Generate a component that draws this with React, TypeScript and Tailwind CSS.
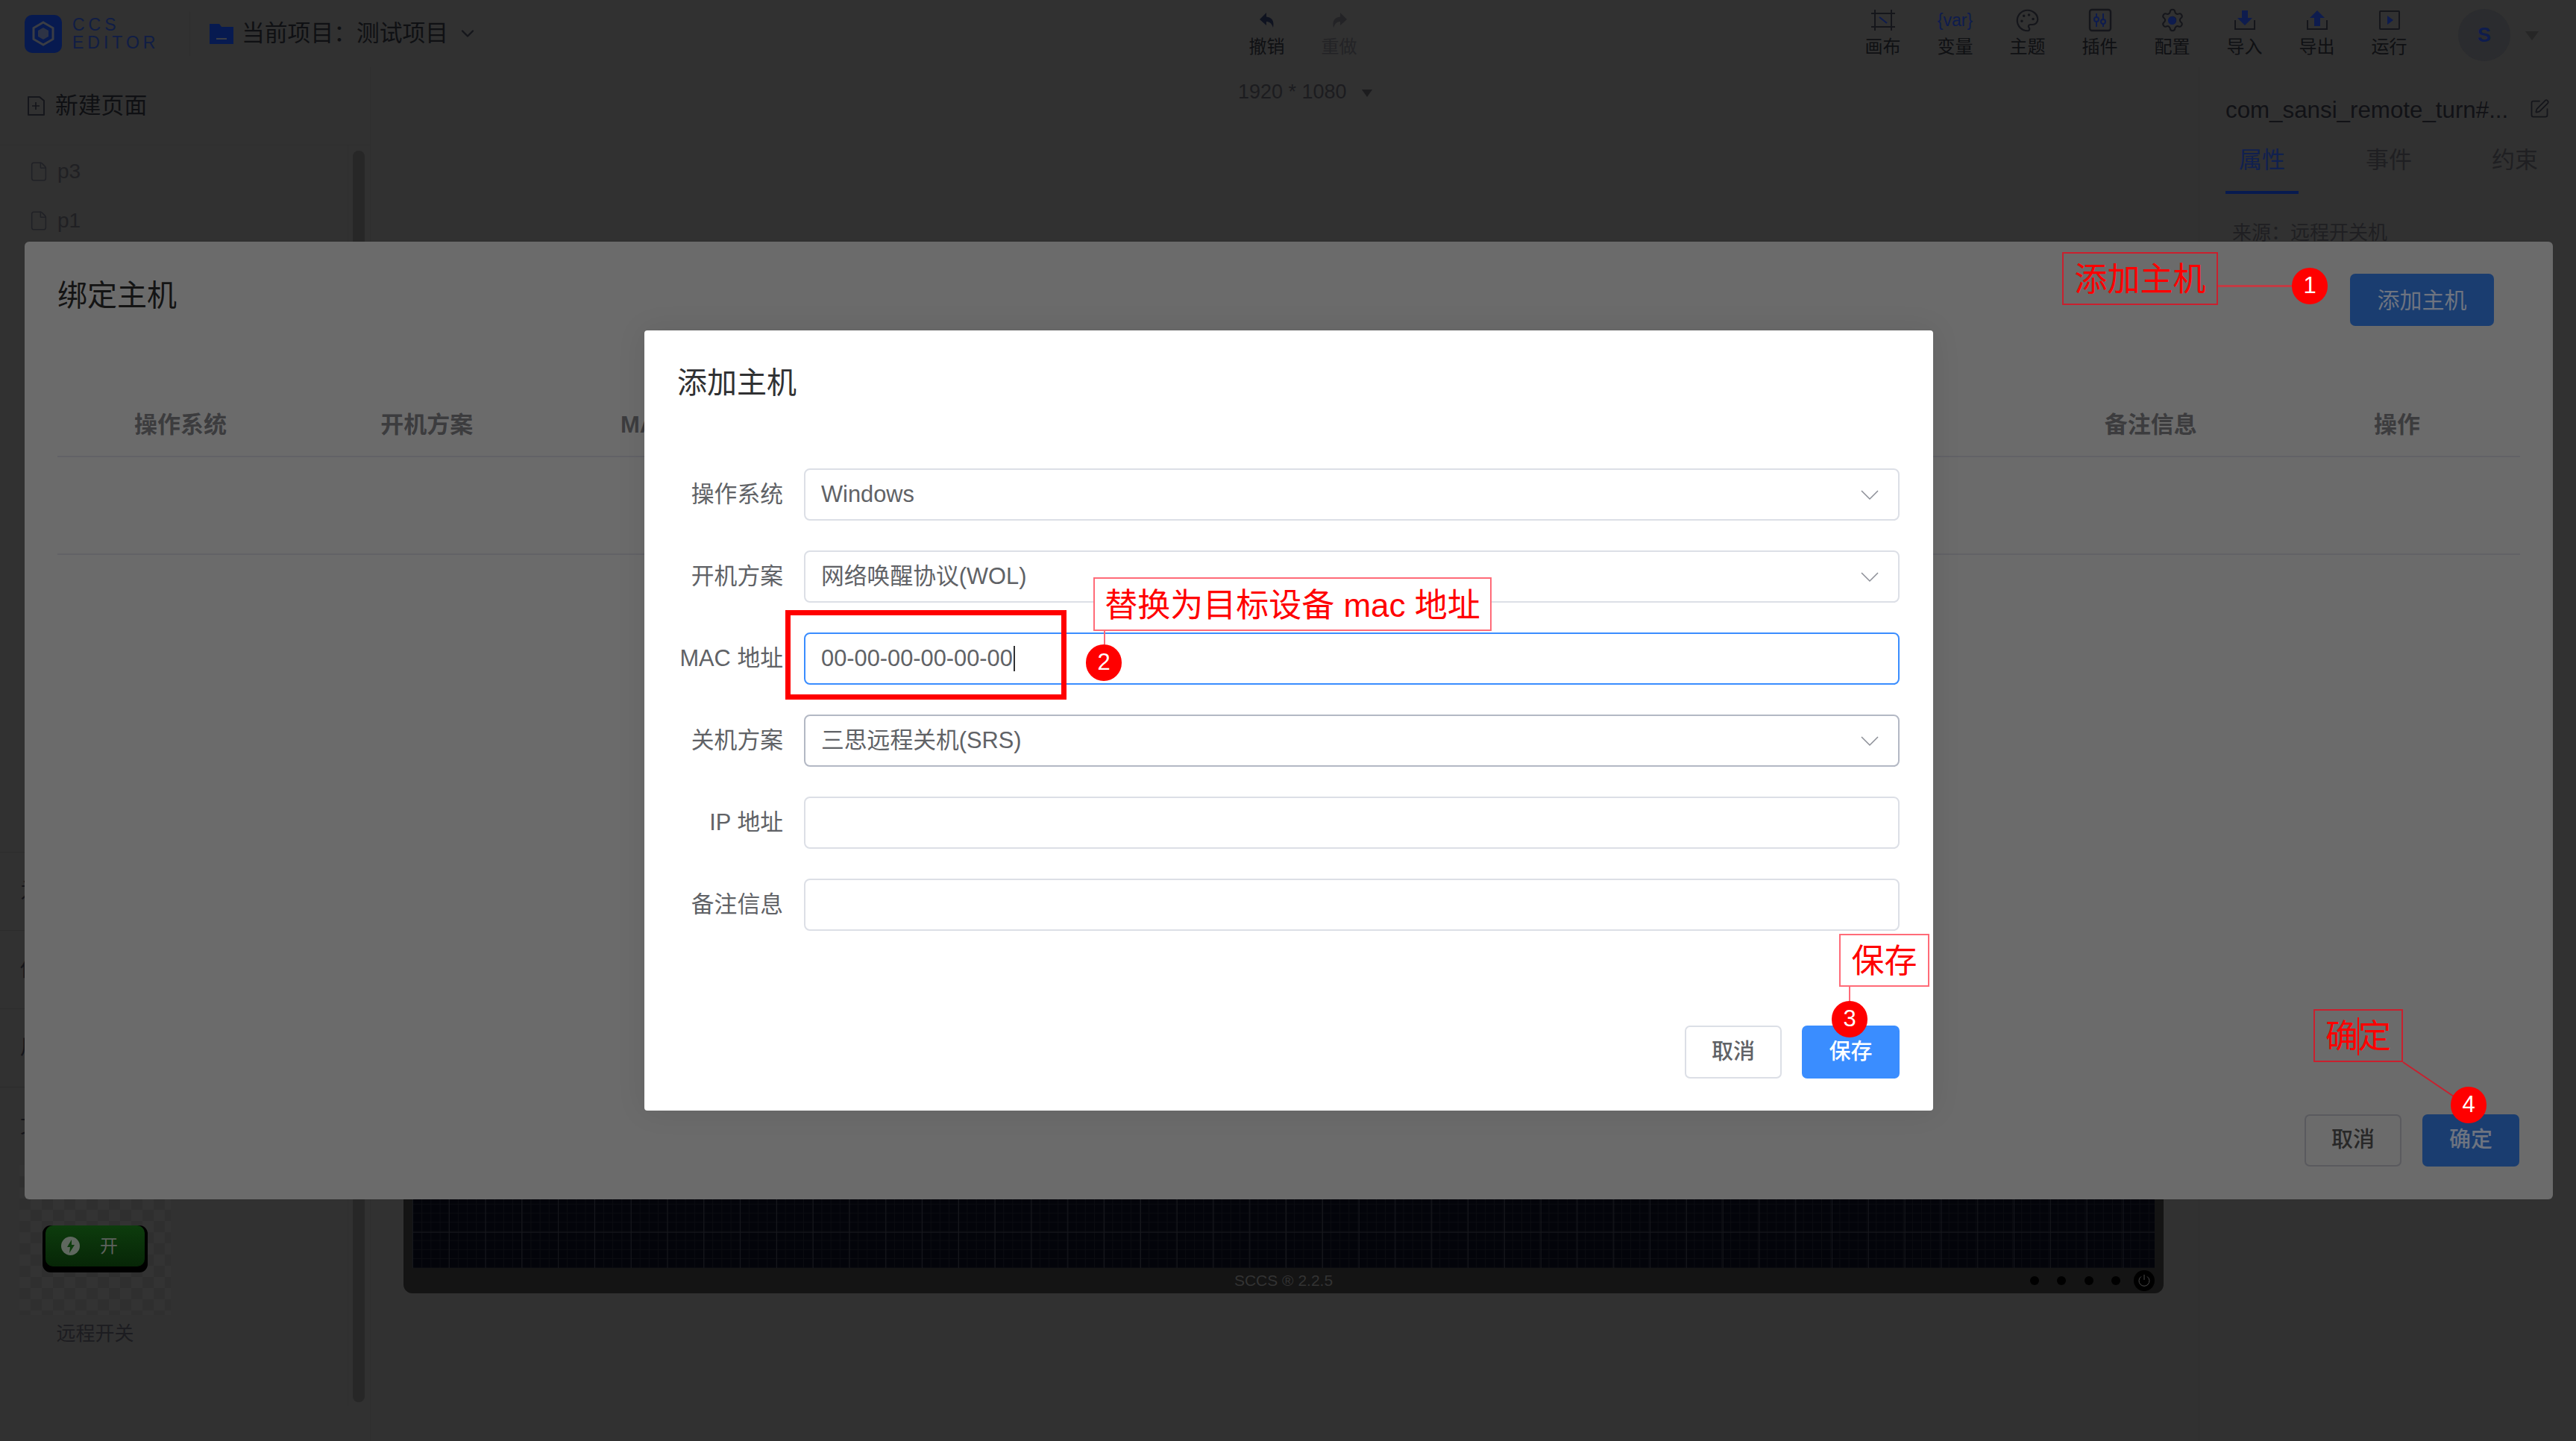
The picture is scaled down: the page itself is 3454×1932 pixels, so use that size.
import { ChevronDown, File, Palette, Settings, SquarePen } from "lucide-react";
import type { ReactNode } from "react";

const DARK = "#15161b";
const NAVY = "#0e1c4e";

const UndoIcon = ({ flip, color }: { flip?: boolean; color: string }) => (
  <svg width="24" height="22" viewBox="0 0 24 22" className={flip ? "-scale-x-100" : ""}>
    <path d="M11 1 L2 10 L11 18 V13 C15 13 18 15 20 21 C22 12 18 7 11 6.5Z" fill={color} />
  </svg>
);

const CanvasIcon = () => (
  <svg width="34" height="30" viewBox="0 0 34 30" fill="none">
    <path d="M6 1V29M28 1V29M1 6H33M1 24H33" stroke={DARK} strokeWidth="2" />
    <path d="M12 11L22 19" stroke={NAVY} strokeWidth="2" />
  </svg>
);

const PluginIcon = () => (
  <svg width="32" height="32" viewBox="0 0 32 32" fill="none">
    <rect x="2" y="2" width="28" height="28" rx="3" stroke={DARK} strokeWidth="2.4" />
    <path d="M11 7V12M11 18V25M20 7V15M20 21V25" stroke={NAVY} strokeWidth="2" />
    <circle cx="11" cy="15" r="3" stroke={NAVY} strokeWidth="2" />
    <circle cx="20" cy="18" r="3" stroke={NAVY} strokeWidth="2" />
  </svg>
);

const GearIcon = () => (
  <div className="relative flex items-center justify-center">
    <Settings size={34} strokeWidth={1.4} color={DARK} />
    <div className="absolute h-[11px] w-[11px] rounded-full bg-[#0e1c4e]" />
  </div>
);

const TrayIcon = ({ up }: { up?: boolean }) => (
  <svg width="30" height="28" viewBox="0 0 30 28" fill="none">
    <path d="M2 14V26H28V14" stroke={DARK} strokeWidth="2" />
    {up ? (
      <path d="M15 1L25 11H19V22H11V11H5Z" fill={NAVY} />
    ) : (
      <path d="M11 1H19V11H25L15 21L5 11H11Z" fill={NAVY} />
    )}
  </svg>
);

const RunIcon = () => (
  <svg width="28" height="26" viewBox="0 0 28 26" fill="none">
    <rect x="1" y="1" width="26" height="24" rx="1" stroke={DARK} strokeWidth="2" />
    <path d="M11 7L19 13L11 19Z" fill={NAVY} />
  </svg>
);

const SelectChevron = () => (
  <svg className="ml-auto" width="26" height="15" viewBox="0 0 26 15" fill="none">
    <path d="M2 2L13 13L24 2" stroke="#8b8e96" strokeWidth="1.5" />
  </svg>
);

const tools: { label: string; icon: ReactNode; muted?: boolean }[] = [
  { label: "画布", icon: <CanvasIcon /> },
  { label: "变量", icon: <span className="text-[23px] text-[#0e1c4e]">{"{var}"}</span> },
  { label: "主题", icon: <Palette size={33} strokeWidth={1.6} color={DARK} /> },
  { label: "插件", icon: <PluginIcon /> },
  { label: "配置", icon: <GearIcon /> },
  { label: "导入", icon: <TrayIcon /> },
  { label: "导出", icon: <TrayIcon up /> },
  { label: "运行", icon: <RunIcon /> },
];

const ToolItem = ({ label, icon, muted }: { label: string; icon: ReactNode; muted?: boolean }) => (
  <div className="flex w-[97px] shrink-0 flex-col items-center pt-[11px]">
    <div className="flex h-[32px] items-center justify-center">{icon}</div>
    <span className={`mt-[7px] text-[24px] leading-[26px] ${muted ? "text-[#232326]" : "text-[#0f1013]"}`}>{label}</span>
  </div>
);

const Header = () => (
  <header className="flex h-[90px] shrink-0">
    <div className="flex w-[1650px] shrink-0 items-center pl-[33px]">
      <div className="flex h-[51px] w-[50px] items-center justify-center rounded-[10px] bg-[#071a50]">
        <svg width="32" height="34" viewBox="0 0 32 34" fill="none">
          <path d="M16 2L29 9.5V24.5L16 32L3 24.5V9.5Z" stroke="#3a3d45" strokeWidth="3" />
          <path d="M16 9L23 13V21L16 25L9 21V13Z" fill="#2d3345" />
        </svg>
      </div>
      <div className="ml-[14px] flex w-[157px] shrink-0 flex-col gap-[1px] text-[23px] leading-[23px] tracking-[5px] text-[#101d45]">
        <span>CCS</span>
        <span>EDITOR</span>
      </div>
      <div className="h-[60px] w-px bg-[#2e2e2e]" />
      <svg className="ml-[26px]" width="32" height="27" viewBox="0 0 32 27">
        <path d="M0 0H13L16 4H32V27H0Z" fill="#071a50" />
        <path d="M9 20H23" stroke="#3a3d45" strokeWidth="2" />
      </svg>
      <span className="ml-[11px] text-[30.8px] leading-[40px] text-[#0f1013]">当前项目：测试项目</span>
      <ChevronDown className="ml-[12px]" size={28} strokeWidth={2} color={DARK} />
    </div>
    <ToolItem label="撤销" icon={<UndoIcon color="#0f1320" />} />
    <ToolItem label="重做" icon={<UndoIcon flip color="#232326" />} muted />
    <div className="w-[632px] shrink-0" />
    {tools.map((t) => (
      <ToolItem key={t.label} {...t} />
    ))}
    <div className="ml-[44px] mt-[12px] flex h-[70px] w-[70px] items-center justify-center rounded-full bg-[#2b2c2f] text-[27px] font-bold text-[#0e1c4e]">
      S
    </div>
    <div className="ml-[20px] mt-[42px] h-0 w-0 border-x-[9px] border-t-[12px] border-x-transparent border-t-[#262626]" />
  </header>
);

const Sidebar = () => (
  <aside className="flex w-[497px] shrink-0 flex-col border-r border-[#2e2e2e]">
    <div className="flex h-[105px] shrink-0 items-center gap-[14px] border-b border-[#2e2e2e] pl-[36px]">
      <svg width="24" height="26" viewBox="0 0 24 26" fill="none">
        <path d="M2 1H17L23 6V25H2Z" stroke={DARK} strokeWidth="2" strokeLinejoin="round" />
        <path d="M12 8V18M7 13H17" stroke={DARK} strokeWidth="1.6" />
      </svg>
      <span className="text-[30.8px] text-[#0f1013]">新建页面</span>
    </div>
    <div className="flex h-[1690px] shrink-0 pr-[7px]">
      <div className="flex flex-1 flex-col border-r border-[#2e2e2e] pt-[2px]">
        {["p3", "p1"].map((p) => (
          <div key={p} className="flex h-[66px] shrink-0 items-center gap-[11px] pl-[38px] text-[28px] text-[#202023]">
            <File size={28} strokeWidth={1.3} color="#202126" />
            {p}
          </div>
        ))}
        <div className="mt-[813px] flex flex-col">
          {["为", "传", "川", "文"].map((c) => (
            <div key={c} className="flex h-[105px] items-center border-t border-[#2c2c2c] pl-[27px] text-[28px] text-[#15161b]">
              {c}
            </div>
          ))}
        </div>
        <div className="ml-[26px] flex h-[201px] w-[203px] flex-col items-center justify-end bg-[repeating-conic-gradient(#2f2f2f_0_25%,#333333_0_50%)] bg-[size:30px_30px] pb-[57px]">
          <div className="h-[63px] w-[141px] rounded-[11px] bg-black px-[4px]">
            <div className="flex h-[55px] items-center gap-[27px] rounded-[10px] bg-gradient-to-b from-[#0d3c0d] to-[#072607] pl-[21px]">
              <div className="flex h-[25px] w-[25px] items-center justify-center rounded-full bg-[#5f685f]">
                <svg width="12" height="18" viewBox="0 0 12 18">
                  <path d="M7 0L1 10H5L4 18L11 7H7Z" fill="#0d3c0d" />
                </svg>
              </div>
              <span className="text-[24px] text-[#5d625d]">开</span>
            </div>
          </div>
        </div>
        <div className="ml-[26px] mt-[12px] w-[203px] text-center text-[26px] leading-[26px] text-[#1c1c20]">远程开关</div>
      </div>
      <div className="ml-[6px] mt-[7px] h-[1678px] w-[16px] rounded-full bg-[#272727]" />
    </div>
  </aside>
);

const CanvasArea = () => (
  <main className="flex min-w-0 flex-1 flex-col pl-[44px] pr-[47px]">
    <div className="flex h-[66px] shrink-0 items-center gap-[20px] pl-[1119px]">
      <span className="text-[27px] text-[#1c1c1f]">1920 * 1080</span>
      <div className="mt-[4px] h-0 w-0 border-x-[7px] border-t-[10px] border-x-transparent border-t-[#1c1c1e]" />
    </div>
    <div className="mt-[227px] flex h-[1351px] flex-col rounded-b-[12px] bg-[#141414] px-[12px]">
      <div className="flex-1 bg-[#03040a] bg-[linear-gradient(#17181d_1px,transparent_1px),linear-gradient(90deg,#17181d_1px,transparent_1px),linear-gradient(#0b0c11_1px,transparent_1px),linear-gradient(90deg,#0b0c11_1px,transparent_1px)] bg-[size:48.8px_48.8px,48.8px_48.8px,12.2px_12.2px,12.2px_12.2px]" />
      <div className="relative flex h-[34px] shrink-0 items-center justify-center text-[21px] text-[#333333]">
        SCCS ® 2.2.5
        <div className="absolute right-0 flex items-center">
          <div className="mr-[18px] flex gap-[24.5px]">
            {[0, 1, 2, 3].map((d) => (
              <div key={d} className="h-[12px] w-[12px] rounded-full bg-black" />
            ))}
          </div>
          <div className="flex h-[28px] w-[28px] items-center justify-center rounded-full bg-black">
            <svg width="18" height="18" viewBox="0 0 18 18" fill="none">
              <path d="M5 3.5A7 7 0 1 0 13 3.5M9 1V8" stroke="#4a4a4a" strokeWidth="1" />
            </svg>
          </div>
        </div>
      </div>
    </div>
  </main>
);

const RightPanel = () => (
  <aside className="flex w-[506px] shrink-0 flex-col border-l border-[#2e2e2e] pl-[35px]">
    <div className="mt-[38px] flex h-[40px] items-center">
      <span className="w-[401px] whitespace-nowrap text-[31.3px] text-[#111216]">com_sansi_remote_turn#...</span>
      <SquarePen className="-mt-[4px] ml-[6px]" size={28} strokeWidth={1.5} color={DARK} />
    </div>
    <div className="mt-[27px] flex text-[31px] leading-[40px] text-[#1f1f22]">
      <span className="w-[98px] border-b-4 border-[#071a50] pb-[21px] text-center text-[#10204f]">属性</span>
      <span className="ml-[72px] w-[98px] text-center">事件</span>
      <span className="ml-[71px] w-[98px] text-center">约束</span>
    </div>
    <div className="ml-[9px] mt-[36px] text-[26px] leading-[32px] text-[#1f1f22]">来源：远程开关机</div>
  </aside>
);

const HostsDialog = () => (
  <div className="absolute left-[33px] top-[324px] flex h-[1284px] w-[3390px] flex-col rounded-[6px] bg-[#6b6b6b]">
    <div className="flex items-start justify-between pl-[44px] pr-[79px] pt-[43px]">
      <h2 className="mt-[9px] text-[40px] leading-[40px] text-[#141414]">绑定主机</h2>
      <button className="h-[70px] w-[193px] rounded-[7px] bg-[#1a3d70] text-[30px] text-[#6e7480]">添加主机</button>
    </div>
    <div className="ml-[44px] mr-[44px] mt-[113px] grid grid-cols-10 border-b-2 border-[#626266] pb-[21px] text-center text-[31px] font-bold leading-[40px] text-[#3c3c3e]">
      {["操作系统", "开机方案", "MAC 地址", "关机方案", "IP 地址", "", "", "", "备注信息", "操作"].map((c, i) => (
        <div key={i}>{c}</div>
      ))}
    </div>
    <div className="ml-[44px] mr-[44px] h-[131px] border-b-2 border-[#626266]" />
    <div className="mt-auto flex justify-end gap-[28px] pb-[44px] pr-[45px]">
      <button className="h-[70px] w-[130px] rounded-[7px] border-2 border-[#5a5a5e] text-[29px] font-medium text-[#282828]">取消</button>
      <button className="h-[70px] w-[130px] rounded-[7px] bg-[#1a3d70] text-[29px] font-medium text-[#6e7480]">确定</button>
    </div>
  </div>
);

type Field = { label: string; value?: string; select?: boolean; border?: string; caret?: boolean };

const fields: Field[] = [
  { label: "操作系统", value: "Windows", select: true, border: "border-[#dcdfe6]" },
  { label: "开机方案", value: "网络唤醒协议(WOL)", select: true, border: "border-[#dcdfe6]" },
  { label: "MAC 地址", value: "00-00-00-00-00-00", border: "border-[#3a8dff]", caret: true },
  { label: "关机方案", value: "三思远程关机(SRS)", select: true, border: "border-[#b3b8c4]" },
  { label: "IP 地址", border: "border-[#dcdfe6]" },
  { label: "备注信息", border: "border-[#dcdfe6]" },
];

const AddHostDialog = () => (
  <div className="absolute left-[864px] top-[443px] flex h-[1046px] w-[1728px] flex-col rounded-[4px] bg-white pl-[44px] pr-[45px] shadow-[0_0_40px_rgba(0,0,0,0.08)]">
    <h3 className="mt-[50px] text-[40px] leading-[40px] text-[#303133]">添加主机</h3>
    <div className="mt-[95px] flex flex-col gap-[40px]">
      {fields.map((f) => (
        <div key={f.label} className="flex items-center gap-[28px]">
          <label className="w-[142px] shrink-0 whitespace-nowrap text-right text-[30.8px] text-[#606266]">{f.label}</label>
          <div className={`flex h-[70px] flex-1 items-center rounded-[8px] border-2 pl-[21px] pr-[25px] text-[30.8px] text-[#606266] ${f.border}`}>
            <span>{f.value}</span>
            {f.caret && <span className="ml-[1px] h-[34px] w-[2px] bg-[#303133]" />}
            {f.select && <SelectChevron />}
          </div>
        </div>
      ))}
    </div>
    <div className="mt-auto flex justify-end gap-[27px] pb-[43px]">
      <button className="h-[71px] w-[130px] rounded-[7px] border-2 border-[#dcdfe6] text-[29px] font-medium text-[#606266]">取消</button>
      <button className="h-[71px] w-[131px] rounded-[7px] bg-[#3a8dff] text-[29px] font-medium text-white">保存</button>
    </div>
  </div>
);

const Step = ({ n, className }: { n: number; className: string }) => (
  <div className={`absolute flex h-[49px] w-[48px] items-center justify-center rounded-full bg-[#ff0000] text-[31px] font-medium text-white ${className}`}>
    {n}
  </div>
);

const Annotations = () => (
  <>
    {/* 1 添加主机 */}
    <div className="absolute left-[2765px] top-[338px] flex h-[71px] w-[209px] items-center justify-center border-2 border-[#c9202e] pt-[3px] text-[44px] text-[#ff0000]">添加主机</div>
    <div className="absolute left-[2974px] top-[382px] h-[3px] w-[99px] bg-[#c23a44]" />
    <Step n={1} className="left-[3073px] top-[359px]" />

    {/* 2 MAC 地址 */}
    <div className="absolute left-[1053px] top-[818px] h-[120px] w-[377px] border-[7px] border-[#ff0000]" />
    <div className="absolute left-[1466px] top-[774px] flex h-[72px] w-[534px] items-center justify-center whitespace-nowrap border-2 border-[#ff6b78] bg-white pt-[3px] text-[44px] text-[#ff0000]">替换为目标设备 mac 地址</div>
    <div className="absolute left-[1480px] top-[846px] h-[18px] w-[2px] bg-[#ff6b78]" />
    <Step n={2} className="left-[1456px] top-[864px]" />

    {/* 3 保存 */}
    <div className="absolute left-[2466px] top-[1252px] flex h-[71px] w-[121px] items-center justify-center border-2 border-[#ff6b78] bg-white pt-[3px] text-[44px] text-[#ff0000]">保存</div>
    <div className="absolute left-[2479px] top-[1323px] h-[19px] w-[2px] bg-[#ff6b78]" />
    <Step n={3} className="left-[2456px] top-[1342px]" />

    {/* 4 确定 */}
    <div className="absolute left-[3102px] top-[1353px] flex h-[71px] w-[120px] items-center justify-center border-2 border-[#c9202e] pt-[3px] text-[44px] text-[#ff0000]">确定</div>
    <div className="absolute left-[3161px] top-[1364px] h-[51px] w-[2px] bg-[#ff0000]" />
    <svg className="absolute left-[3220px] top-[1422px]" width="80" height="60" viewBox="0 0 80 60">
      <path d="M2 2L70 48" stroke="#c9202e" strokeWidth="2" />
    </svg>
    <Step n={4} className="left-[3286px] top-[1457px]" />
  </>
);

export default function App() {
  return (
    <div className="relative flex h-[1932px] w-[3454px] flex-col overflow-hidden bg-[#313131] font-['Liberation_Sans','Noto_Sans_CJK_SC',sans-serif]">
      <Header />
      <div className="flex min-h-0 flex-1">
        <Sidebar />
        <CanvasArea />
        <RightPanel />
      </div>
      <HostsDialog />
      <AddHostDialog />
      <Annotations />
    </div>
  );
}
